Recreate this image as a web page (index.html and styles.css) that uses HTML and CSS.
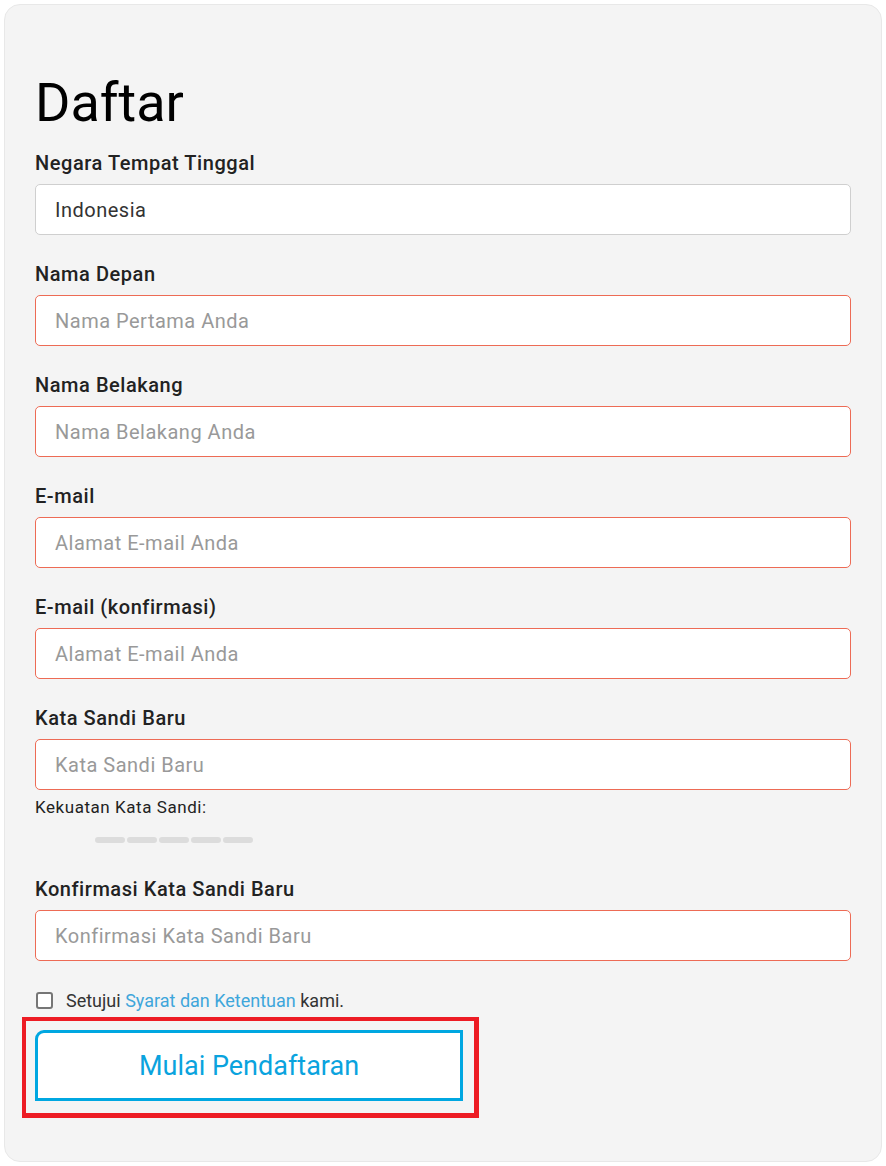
FILE: index.html
```html
<!DOCTYPE html>
<html lang="id">
<head>
<meta charset="utf-8">
<title>Daftar</title>
<link rel="stylesheet" href="styles.css">
</head>
<body>
<div class="card">
  <h1 class="title">Daftar</h1>
  <div class="field">
    <label class="label">Negara Tempat Tinggal</label>
    <div class="input input-plain"><span class="value">Indonesia</span></div>
  </div>
  <div class="field">
    <label class="label">Nama Depan</label>
    <div class="input"><span class="ph">Nama Pertama Anda</span></div>
  </div>
  <div class="field">
    <label class="label">Nama Belakang</label>
    <div class="input"><span class="ph">Nama Belakang Anda</span></div>
  </div>
  <div class="field">
    <label class="label">E-mail</label>
    <div class="input"><span class="ph">Alamat E-mail Anda</span></div>
  </div>
  <div class="field">
    <label class="label">E-mail (konfirmasi)</label>
    <div class="input"><span class="ph">Alamat E-mail Anda</span></div>
  </div>
  <div class="field field-pw">
    <label class="label">Kata Sandi Baru</label>
    <div class="input"><span class="ph">Kata Sandi Baru</span></div>
    <div class="strength-label">Kekuatan Kata Sandi:</div>
    <div class="strength">
      <span class="seg"></span><span class="seg"></span><span class="seg"></span><span class="seg"></span><span class="seg"></span>
    </div>
  </div>
  <div class="field">
    <label class="label">Konfirmasi Kata Sandi Baru</label>
    <div class="input"><span class="ph">Konfirmasi Kata Sandi Baru</span></div>
  </div>
  <div class="agree">
    <span class="checkbox"></span>
    <span class="agree-text">Setujui <a class="link">Syarat dan Ketentuan</a> kami.</span>
  </div>
  <div class="btn-wrap">
    <div class="btn">Mulai Pendaftaran</div>
    <div class="highlight"></div>
  </div>
</div>
</body>
</html>
```
FILE: styles.css
```css
* { box-sizing: border-box; }
html, body { margin: 0; padding: 0; background: #ffffff; }
body { font-family: Roboto, "Noto Sans", "Liberation Sans", sans-serif; }

.card {
  margin: 4px;
  width: 878px;
  height: 1158px;
  background: #f4f4f4;
  border: 1px solid #e8e8e8;
  border-radius: 16px;
  padding: 66px 30px 0 30px;
}

.title {
  margin: 0;
  font-size: 54px;
  font-weight: 400;
  line-height: 64px;
  color: #000;
}

.field { margin-top: 16px; }
.field + .field { margin-top: 27px; }

.label {
  display: block;
  font-size: 20px;
  font-weight: 500;
  letter-spacing: 0.55px;
  line-height: 24px;
  color: #222;
  margin-bottom: 9px;
}

.input {
  height: 51px;
  background: #fff;
  border: 1px solid #ed6b55;
  border-radius: 5px;
  padding: 0 19px;
  display: flex;
  align-items: center;
  font-size: 20px;
  letter-spacing: 0.5px;
}
.input-plain { border-color: #cfcfcf; }
.value { color: #333; }
.ph { color: #999; }

.strength-label {
  font-size: 17px;
  letter-spacing: 0.55px;
  line-height: 20px;
  color: #222;
  margin-top: 7px;
}
.strength {
  display: flex;
  gap: 2px;
  margin-top: 20px;
  margin-left: 60px;
}
.seg {
  width: 30px;
  height: 6px;
  border-radius: 3px;
  background: #dcdcdc;
}
.field-pw + .field { margin-top: 34px; }

.agree {
  display: flex;
  align-items: center;
  margin-top: 29px;
  height: 20px;
}
.checkbox {
  width: 17px;
  height: 17px;
  border: 2px solid #767676;
  border-radius: 3px;
  background: #fff;
  margin-left: 1px;
  margin-right: 13px;
}
.agree-text {
  font-size: 18px;
  letter-spacing: 0;
  color: #333;
}
.link { color: #3ea6db; text-decoration: none; }

.btn-wrap {
  position: relative;
  width: 428px;
  margin-top: 20px;
}
.btn {
  height: 71px;
  border: 3px solid #00a7e1;
  border-radius: 9px 0 0 0;
  background: #fff;
  color: #0aa3de;
  font-size: 27px;
  display: flex;
  align-items: center;
  justify-content: center;
}
.highlight {
  position: absolute;
  left: -13px;
  top: -13px;
  right: -16px;
  bottom: -17px;
  border: 4px solid #ed1c24;
  border-right-width: 5px;
  border-bottom-width: 5px;
  pointer-events: none;
}
```
